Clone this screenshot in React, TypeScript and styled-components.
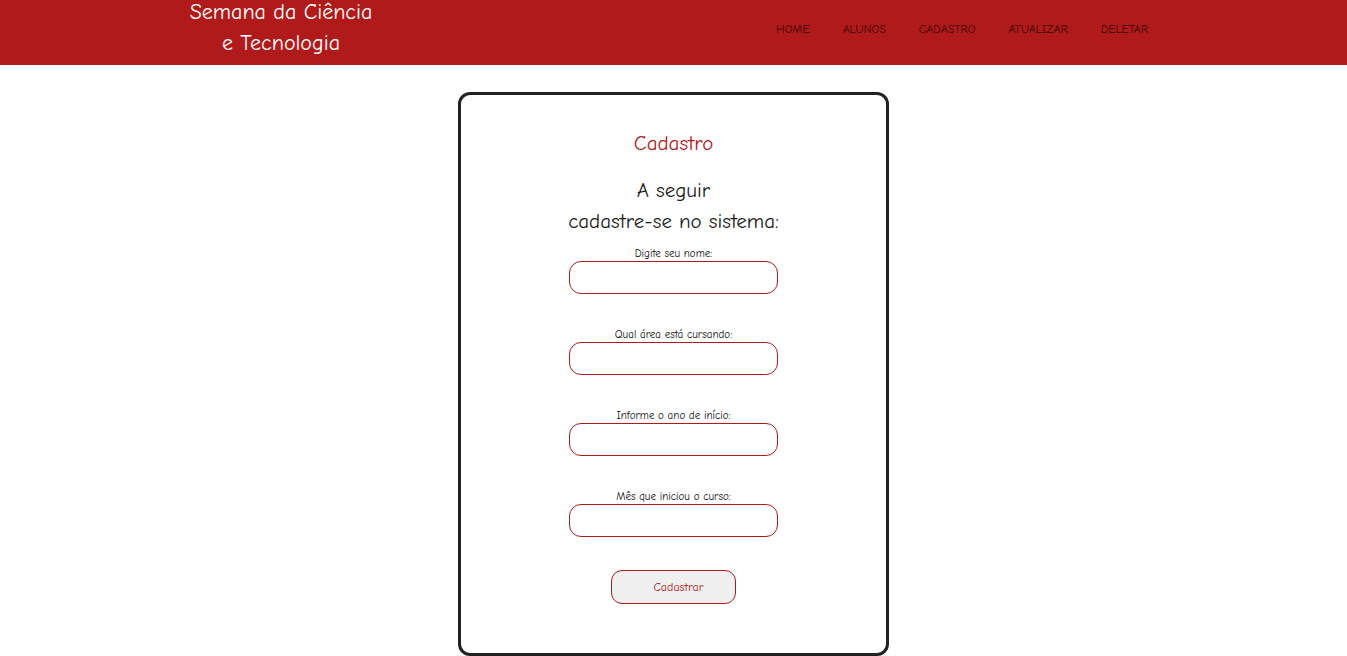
import React from "react";
import styled, { createGlobalStyle } from "styled-components";

const FONT = `"Comic Sans MS", "Comic Neue", "DejaVu Sans", sans-serif`;
const RED = "#b11a1a";

const Global = createGlobalStyle`
  html, body { margin: 0; padding: 0; background: #fff; }
  body { font-family: ${FONT}; }
  * { box-sizing: border-box; }
`;

const Header = styled.header`
  height: 65px;
  background: ${RED};
  display: flex;
  align-items: center;
  justify-content: space-between;
  padding: 0 199px 0 186px;
`;

const Title = styled.h1`
  margin: 0;
  margin-top: -10px;
  font-size: 22px;
  line-height: 31px;
  font-weight: normal;
  color: #fff;
  text-align: center;
  width: 190px;
`;

const Nav = styled.nav`
  display: flex;
  gap: 33px;
  margin-top: -8px;
`;

const NavLink = styled.a`
  font-size: 12px;
  color: #3a0808;
  text-decoration: none;
  text-transform: uppercase;
`;

const Main = styled.main`
  display: flex;
  justify-content: center;
  padding-top: 27px;
`;

const Card = styled.section`
  width: 431px;
  border: 3px solid #222;
  border-radius: 12px;
  padding: 36px 0 49px;
  display: flex;
  flex-direction: column;
  align-items: center;
`;

const CardTitle = styled.h2`
  margin: 0;
  font-size: 21px;
  line-height: 24px;
  font-weight: normal;
  color: ${RED};
`;

const Lead = styled.p`
  margin: 20px 0 0;
  font-size: 21px;
  line-height: 31px;
  color: #1a1a1a;
  text-align: center;
`;

const Form = styled.form`
  display: flex;
  flex-direction: column;
  align-items: center;
  margin-top: 10px;
`;

const Field = styled.div<{ $first?: boolean }>`
  display: flex;
  flex-direction: column;
  align-items: center;
  margin-top: ${(p) => (p.$first ? "0" : "34px")};
`;

const Label = styled.label`
  font-size: 11px;
  line-height: 14px;
  color: #111;
`;

const Input = styled.input`
  width: 209px;
  height: 33px;
  border: 1px solid ${RED};
  border-radius: 12px;
  background: #fff;
  outline: none;
  font-family: ${FONT};
`;

const Button = styled.button`
  margin-top: 33px;
  width: 125px;
  height: 34px;
  padding: 0 0 0 10px;
  border: 1px solid ${RED};
  border-radius: 11px;
  background: #f0f0f0;
  color: ${RED};
  font-family: ${FONT};
  font-size: 12px;
`;

const fields = [
  "Digite seu nome:",
  "Qual área está cursando:",
  "Informe o ano de início:",
  "Mês que iniciou o curso:",
];

export default function App() {
  return (
    <>
      <Global />
      <Header>
        <Title>
          Semana da Ciência
          <br />e Tecnologia
        </Title>
        <Nav>
          {["Home", "Alunos", "Cadastro", "Atualizar", "Deletar"].map((n) => (
            <NavLink key={n} href="#">
              {n}
            </NavLink>
          ))}
        </Nav>
      </Header>
      <Main>
        <Card>
          <CardTitle>Cadastro</CardTitle>
          <Lead>
            A seguir
            <br />
            cadastre-se no sistema:
          </Lead>
          <Form onSubmit={(e) => e.preventDefault()}>
            {fields.map((f, i) => (
              <Field key={f} $first={i === 0}>
                <Label>{f}</Label>
                <Input type="text" />
              </Field>
            ))}
            <Button type="submit">Cadastrar</Button>
          </Form>
        </Card>
      </Main>
    </>
  );
}
